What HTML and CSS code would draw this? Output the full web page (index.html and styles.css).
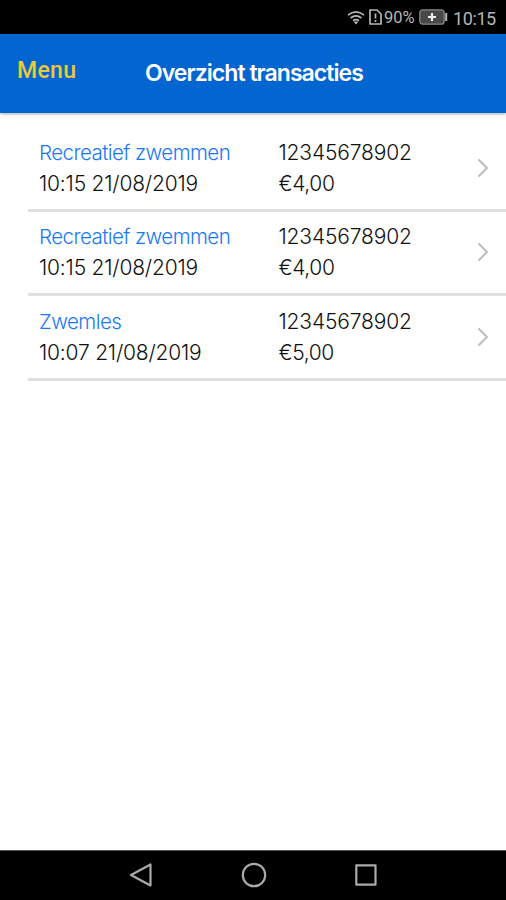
FILE: index.html
```html
<!DOCTYPE html>
<html lang="nl">
<head>
<meta charset="utf-8">
<title>Overzicht transacties</title>
<link rel="stylesheet" href="styles.css">
</head>
<body>
<div class="statusbar">
  <svg class="wifi" width="18" height="15" viewBox="0 0 18 15" fill="none" stroke="#b5b5b5" stroke-width="1.7"><path d="M1 5.2Q9-1.4 17 5.2M3.6 8Q9 3.8 14.4 8M6 10.7Q9 8.4 12 10.7"/><path d="M6.500 11.500h5L9 14.6z" fill="#b5b5b5" stroke="none"/></svg>
  <svg class="sim" width="13" height="16" viewBox="0 0 13 16" fill="none" stroke="#b5b5b5" stroke-width="1.7"><path d="M1 1h7l4 4v10H1zM6.5 4.5v5M6.5 11v2"/></svg>
  <span class="percent">90%</span>
  <svg class="battery" width="29" height="16" viewBox="0 0 29 16"><rect x=".8" y=".8" width="24.4" height="14.4" rx="3" fill="#484848" stroke="#858585" stroke-width="1.3"/><path d="M27.2 4v8" stroke="#b5b5b5" stroke-width="2"/><path d="M13 4v8M9 8h8" stroke="#eee" stroke-width="2.2"/></svg>
  <span class="clock">10:15</span>
</div>
<header class="header">
  <span class="menu">Menu</span>
  <h1 class="title">Overzicht transacties</h1>
</header>
<main class="list">
  <div class="row">
    <div class="activity"><div class="name">Recreatief zwemmen</div><div class="time">10:15 21/08/2019</div></div>
    <div class="payment"><div>12345678902</div><div class="amount">€4,00</div></div>
    <svg class="chevron" width="12" height="20" viewBox="0 0 12 20"><path d="M1.5 1.5L10 10l-8.500 8.500"/></svg>
  </div>
  <div class="row">
    <div class="activity"><div class="name">Recreatief zwemmen</div><div class="time">10:15 21/08/2019</div></div>
    <div class="payment"><div>12345678902</div><div class="amount">€4,00</div></div>
    <svg class="chevron" width="12" height="20" viewBox="0 0 12 20"><path d="M1.5 1.5L10 10l-8.500 8.500"/></svg>
  </div>
  <div class="row">
    <div class="activity"><div class="name">Zwemles</div><div class="time">10:07 21/08/2019</div></div>
    <div class="payment"><div>12345678902</div><div class="amount">€5,00</div></div>
    <svg class="chevron" width="12" height="20" viewBox="0 0 12 20"><path d="M1.5 1.5L10 10l-8.500 8.500"/></svg>
  </div>
</main>
<nav class="navbar">
  <svg width="24" height="26" viewBox="0 0 24 26"><path d="M21.500 2.500v21L2 13z"/></svg>
  <svg width="26" height="26" viewBox="0 0 26 26"><circle cx="13" cy="13" r="11.200"/></svg>
  <svg width="24" height="26" viewBox="0 0 24 26"><rect x="2.300" y="3.300" width="19.200" height="19.400"/></svg>
</nav>
</body>
</html>
```
FILE: styles.css
```css
* { box-sizing: border-box; }
body {
  margin: 0;
  height: 900px;
  display: flex;
  flex-direction: column;
  background: #fff;
  color: #111;
  font-family: Inter, "Liberation Sans", sans-serif;
}
.statusbar {
  height: 34px;
  background: #000;
  display: flex;
  align-items: center;
  justify-content: flex-end;
  padding-right: 10px;
  color: #b5b5b5;
  font-family: Roboto, sans-serif;
  font-size: 18px;
}
.wifi { margin-right: 4px; }
.sim { margin-right: 2px; }
.percent { font-size: 16.5px; width: 34px; }
.battery { margin: 0 5px 0 1px; }
.clock { width: 43px; letter-spacing: -0.4px; margin-top: 2px; }
.header {
  height: 79px;
  background: #0366d0;
  box-shadow: 0 1px 3px rgba(0, 0, 0, 0.35);
  display: flex;
  align-items: flex-start;
  padding-left: 17px;
}
.menu {
  width: 128px;
  margin-top: 23px;
  font: 500 23px/28px Roboto, sans-serif;
  letter-spacing: 0.3px;
  color: #efc83a;
}
.title {
  margin: 25px 0 0;
  font-size: 23px;
  line-height: 28px;
  font-weight: 600;
  letter-spacing: -0.95px;
  white-space: nowrap;
  color: #fff;
}
.list { flex: 1; padding: 14px 0 0 28px; }
.row {
  height: 84.5px;
  border-bottom: 3px solid #e0e0e0;
  display: flex;
  align-items: center;
  padding: 0 17px 0 11px;
  font-size: 21px;
  font-weight: 300;
  line-height: 31px;
  letter-spacing: -0.15px;
  white-space: nowrap;
}
.activity { width: 239.500px; }
.name { color: #1a78f5; font-size: 20.5px; letter-spacing: -0.55px; }
.time { letter-spacing: -0.2px; }
.payment { flex: 1; }
.amount { letter-spacing: -0.4px; }
.chevron { fill: none; stroke: #bdbdbd; stroke-width: 2; }
.navbar {
  height: 50px;
  background: #000;
  border-top: 1px solid #555;
  display: flex;
  justify-content: space-between;
  align-items: center;
  padding: 0 128px 2px 129px;
}
.navbar svg { fill: none; stroke: #aaa; stroke-width: 2.2; stroke-linejoin: round; }
```
